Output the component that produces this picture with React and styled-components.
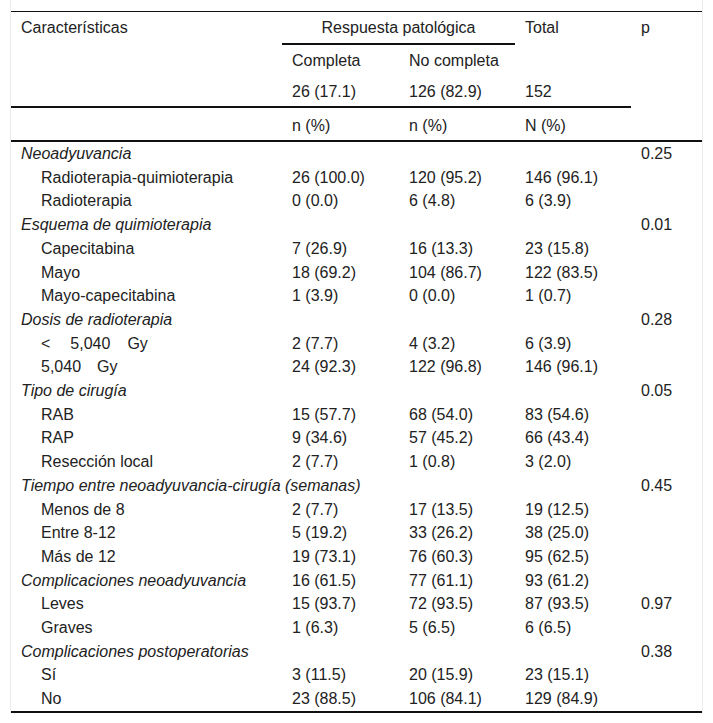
import React from "react";
import styled, { createGlobalStyle } from "styled-components";

const GlobalStyle = createGlobalStyle`
  html, body {
    margin: 0;
    padding: 0;
    background: #ffffff;
  }
  body {
    font-family: "Liberation Sans", Arial, Helvetica, sans-serif;
    color: #222;
  }
`;

const rows = [
  { group: "Neoadyuvancia", p: "0.25" },
  { label: "Radioterapia-quimioterapia", v: ["26 (100.0)", "120 (95.2)", "146 (96.1)"] },
  { label: "Radioterapia", v: ["0 (0.0)", "6 (4.8)", "6 (3.9)"] },
  { group: "Esquema de quimioterapia", p: "0.01" },
  { label: "Capecitabina", v: ["7 (26.9)", "16 (13.3)", "23 (15.8)"] },
  { label: "Mayo", v: ["18 (69.2)", "104 (86.7)", "122 (83.5)"] },
  { label: "Mayo-capecitabina", v: ["1 (3.9)", "0 (0.0)", "1 (0.7)"] },
  { group: "Dosis de radioterapia", p: "0.28" },
  { label: "lt", v: ["2 (7.7)", "4 (3.2)", "6 (3.9)"] },
  { label: "ge", v: ["24 (92.3)", "122 (96.8)", "146 (96.1)"] },
  { group: "Tipo de cirugía", p: "0.05" },
  { label: "RAB", v: ["15 (57.7)", "68 (54.0)", "83 (54.6)"] },
  { label: "RAP", v: ["9 (34.6)", "57 (45.2)", "66 (43.4)"] },
  { label: "Resección local", v: ["2 (7.7)", "1 (0.8)", "3 (2.0)"] },
  { group: "Tiempo entre neoadyuvancia-cirugía (semanas)", p: "0.45" },
  { label: "Menos de 8", v: ["2 (7.7)", "17 (13.5)", "19 (12.5)"] },
  { label: "Entre 8-12", v: ["5 (19.2)", "33 (26.2)", "38 (25.0)"] },
  { label: "Más de 12", v: ["19 (73.1)", "76 (60.3)", "95 (62.5)"] },
  { group: "Complicaciones neoadyuvancia", v: ["16 (61.5)", "77 (61.1)", "93 (61.2)"] },
  { label: "Leves", v: ["15 (93.7)", "72 (93.5)", "87 (93.5)"], p: "0.97" },
  { label: "Graves", v: ["1 (6.3)", "5 (6.5)", "6 (6.5)"] },
  { group: "Complicaciones postoperatorias", p: "0.38" },
  { label: "Sí", v: ["3 (11.5)", "20 (15.9)", "23 (15.1)"] },
  { label: "No", v: ["23 (88.5)", "106 (84.1)", "129 (84.9)"] },
];

const renderLabel = (label) => {
  if (label === "lt")
    return (
      <>
        &lt;<Gap w={20} />5,040<Gap w={17} />Gy
      </>
    );
  if (label === "ge")
    return (
      <>
        5,040<Gap w={16} />Gy
      </>
    );
  return label;
};

const App = () => {
  return (
    <>
      <GlobalStyle />
      <Frame>
        <Table>
          <colgroup>
            <col style={{ width: 271 }} />
            <col style={{ width: 117 }} />
            <col style={{ width: 116 }} />
            <col style={{ width: 116 }} />
            <col />
          </colgroup>
          <thead>
            <tr>
              <Th rowSpan={3} $rule>
                Características
              </Th>
              <Th colSpan={2} $rule $center>
                Respuesta patológica
              </Th>
              <Th rowSpan={2}>Total</Th>
              <Th rowSpan={3}>p</Th>
            </tr>
            <tr>
              <Th>Completa</Th>
              <Th>No completa</Th>
            </tr>
            <tr>
              <Th $rule $bottom={5}>26 (17.1)</Th>
              <Th $rule $bottom={5}>126 (82.9)</Th>
              <Th $rule $bottom={5}>152</Th>
            </tr>
            <tr>
              <Th $rule $top={8} $bottom={5} />
              <Th $rule $top={8} $bottom={5}>n (%)</Th>
              <Th $rule $top={8} $bottom={5}>n (%)</Th>
              <Th $rule $top={8} $bottom={5}>N (%)</Th>
              <Th $rule $top={8} $bottom={5} />
            </tr>
          </thead>
          <tbody>
            {rows.map((r, i) =>
              r.group ? (
                r.v ? (
                  <Row key={i}>
                    <Group>{r.group}</Group>
                    {r.v.map((x, j) => (
                      <Td key={j}>{x}</Td>
                    ))}
                    <Td>{r.p}</Td>
                  </Row>
                ) : (
                  <Row key={i}>
                    <Group colSpan={4}>{r.group}</Group>
                    <Td>{r.p}</Td>
                  </Row>
                )
              ) : (
                <Row key={i}>
                  <Td $indent>{renderLabel(r.label)}</Td>
                  {r.v.map((x, j) => (
                    <Td key={j}>{x}</Td>
                  ))}
                  <Td>{r.p}</Td>
                </Row>
              )
            )}
          </tbody>
        </Table>
      </Frame>
    </>
  );
};

export default App;

const Frame = styled.div`
  margin: 0 10px;
  padding-top: 11px;
  border-left: 1px solid #ececec;
  border-right: 1px solid #ececec;
`;

const Table = styled.table`
  width: 100%;
  table-layout: fixed;
  border-collapse: separate;
  border-spacing: 0;
  border-top: 1px solid #111;
  border-bottom: 2px solid #111;
  font-size: 16px;
  color: #222;
`;

const Th = styled.th`
  font-weight: normal;
  text-align: ${(p) => (p.$center ? "center" : "left")};
  vertical-align: top;
  line-height: 19px;
  padding: ${(p) => p.$top ?? 6}px 10px ${(p) => p.$bottom ?? 6}px;
  border-bottom: ${(p) => (p.$rule ? "2px solid #111" : "none")};
  white-space: nowrap;
`;

const Row = styled.tr`
  height: 23.7px;
`;

const Td = styled.td`
  padding: 0 10px 0 ${(p) => (p.$indent ? 30 : 10)}px;
  line-height: 23.7px;
  height: 23.7px;
  white-space: nowrap;
  vertical-align: middle;
`;

const Group = styled(Td)`
  font-style: italic;
`;

const Gap = styled.span`
  display: inline-block;
  width: ${(p) => p.w}px;
`;
